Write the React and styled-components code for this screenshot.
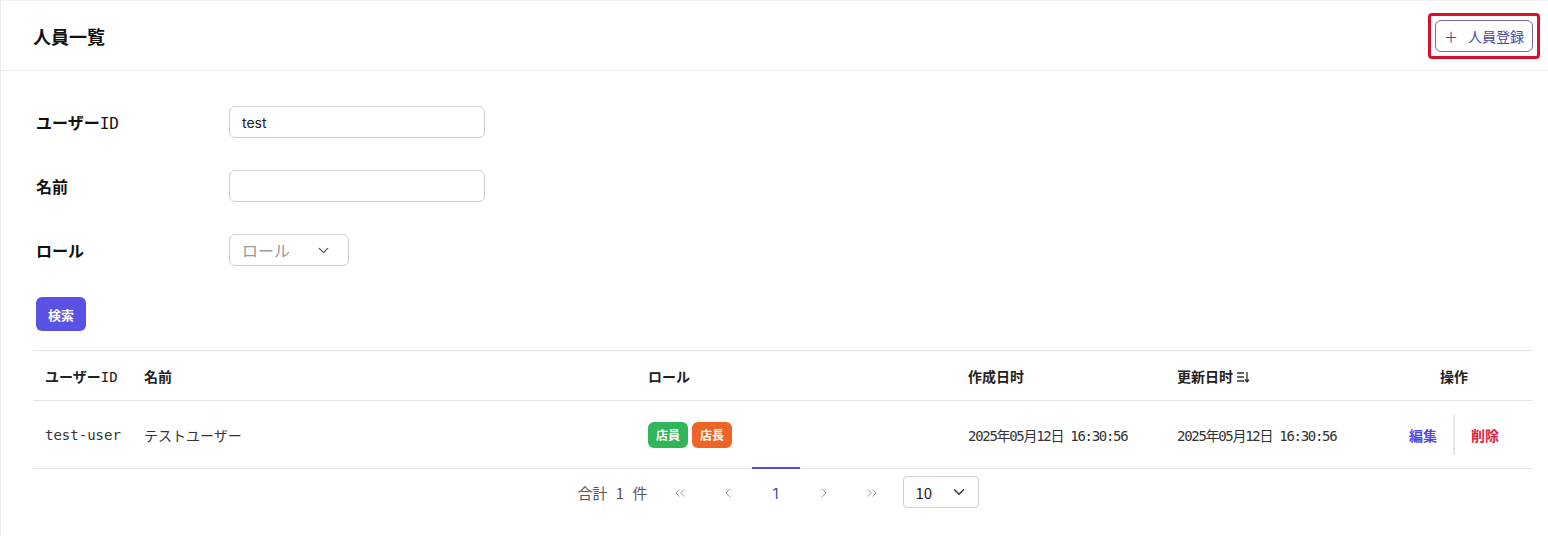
import React from "react";
import styled, { createGlobalStyle } from "styled-components";
import { ChevronDown, ChevronLeft, ChevronRight, ChevronsLeft, ChevronsRight } from "lucide-react";

const GlobalStyle = createGlobalStyle`
  html, body { margin: 0; padding: 0; background: #fff; }
  body { font-family: "Inter", "Noto Sans CJK JP", sans-serif; color: #222; }
`;

const MONO = `"DejaVu Sans Mono", "Noto Sans CJK JP", monospace`;

const Page = styled.div`
  border-left: 1px solid #ececec;
  border-top: 1px solid #f0f0f0;
  min-height: 536px;
  box-sizing: border-box;
`;

const Header = styled.div`
  height: 69px;
  display: flex;
  align-items: center;
  justify-content: space-between;
  padding: 0 15px 0 32px;
  border-bottom: 1px solid #f0f0f0;
`;

const Title = styled.h1`
  margin: 0;
  font-family: "Noto Sans CJK JP", sans-serif;
  font-size: 18px;
  font-weight: 700;
  color: #111;
`;

const Highlight = styled.div`
  margin: -7px -7px -7px 0;
  padding: 4px;
  border: 3px solid #d6102e;
  border-radius: 4px;
  display: flex;
`;

const OutlineButton = styled.button`
  height: 32px;
  width: 98px;
  display: flex;
  align-items: center;
  justify-content: center;
  gap: 10px;
  border: 1px solid #6d69b3;
  border-radius: 6px;
  background: #fff;
  color: #4b46a3;
  font-family: "Noto Sans CJK JP", sans-serif;
  font-size: 14px;
  padding: 0;
`;

const Body = styled.div`
  padding: 35px 15px 0 32px;
`;

const Form = styled.div`
  display: flex;
  flex-direction: column;
  gap: 32px;
  padding-left: 3px;
`;

const FormRow = styled.div`
  display: flex;
  align-items: center;
`;

const Label = styled.label`
  width: 193px;
  font-family: ${MONO};
  font-size: 16px;
  font-weight: 700;
  color: #111;
`;

const Latin = styled.span`
  font-weight: 400;
`;

const TextInput = styled.input`
  box-sizing: border-box;
  width: 256px;
  height: 32px;
  border: 1px solid #cfd0d6;
  border-radius: 6px;
  padding: 0 12px;
  font-family: "Inter", sans-serif;
  font-size: 14px;
  color: #222;
  outline: none;
`;

const SelectBox = styled.div`
  box-sizing: border-box;
  width: ${(p) => p.$width}px;
  height: 32px;
  border: 1px solid #cfd0d6;
  border-radius: ${(p) => p.$radius || 6}px;
  display: flex;
  align-items: center;
  justify-content: space-between;
  padding: 0 ${(p) => p.$padRight || 16}px 0 12px;
  font-family: "Noto Sans CJK JP", sans-serif;
  font-size: ${(p) => p.$fontSize || 16}px;
  color: ${(p) => p.$color || "#999"};
`;

const PrimaryButton = styled.button`
  align-self: flex-start;
  margin-top: -1px;
  width: 50px;
  height: 34px;
  border: none;
  border-radius: 6px;
  background: #5a51e5;
  color: #fff;
  font-family: "Noto Sans CJK JP", sans-serif;
  font-size: 13px;
  font-weight: 700;
  padding: 0;
`;

const Table = styled.table`
  margin-top: 19px;
  width: 100%;
  border-collapse: collapse;
  table-layout: fixed;
`;

const Th = styled.th`
  height: 49px;
  padding: 0 12px;
  text-align: ${(p) => p.$align || "left"};
  font-family: ${MONO};
  font-size: 14px;
  font-weight: 700;
  color: #222;
  border-top: 1px solid #e4e4e7;
  border-bottom: 1px solid #e4e4e7;
  white-space: nowrap;
`;

const Td = styled.td`
  height: 67px;
  padding: 0 12px;
  font-family: ${(p) => p.$font || MONO};
  font-size: 14px;
  color: #333;
  border-bottom: 1px solid #e4e4e7;
  white-space: nowrap;
`;

const DateText = styled.span`
  font-family: "DejaVu Sans Mono", "Noto Sans CJK JP", monospace;
  font-size: 14px;
  letter-spacing: -1.3px;
`;

const SortIcon = styled.svg`
  margin-left: 3px;
  vertical-align: -2px;
`;

const Tags = styled.div`
  display: flex;
  gap: 4px;
`;

const Tag = styled.span`
  display: inline-flex;
  align-items: center;
  justify-content: center;
  width: 40px;
  height: 26px;
  border-radius: 6px;
  background: ${(p) => p.$bg};
  color: #fff;
  font-family: "Noto Sans CJK JP", sans-serif;
  font-size: 12px;
  font-weight: 700;
`;

const Actions = styled.div`
  display: flex;
  align-items: center;
  justify-content: center;
`;

const ActionLink = styled.a`
  font-family: "Noto Sans CJK JP", sans-serif;
  font-size: 14px;
  font-weight: 700;
  color: ${(p) => p.$color};
  padding: 0 16px;
  cursor: pointer;
`;

const Divider = styled.span`
  width: 2px;
  height: 40px;
  background: #e6e6e6;
`;

const Pager = styled.div`
  display: flex;
  align-items: center;
  justify-content: center;
  margin-top: -2px;
  padding-right: 10px;
`;

const Total = styled.span`
  font-family: "Noto Sans CJK JP", sans-serif;
  font-size: 15px;
  color: #555;
  margin-right: 8px;
  word-spacing: 5px;
`;

const PageItem = styled.span`
  box-sizing: border-box;
  width: 48px;
  height: 50px;
  display: flex;
  align-items: center;
  justify-content: center;
  border-top: 2px solid ${(p) => (p.$active ? "#5752c2" : "transparent")};
  color: ${(p) => (p.$active ? "#4d49a8" : "#999")};
  font-family: "Inter", sans-serif;
  font-size: 15px;
`;

const PageSize = styled(SelectBox)`
  margin-left: 7px;
`;

function SortDesc() {
  return (
    <SortIcon width="14" height="14" viewBox="0 0 14 14" fill="none" stroke="#333" strokeWidth="1.3">
      <path d="M1 3h7M1 7h7M1 11h7" />
      <path d="M11 2v10M9 9.5l2 2.5 2-2.5" />
    </SortIcon>
  );
}

export default function App() {
  return (
    <>
      <GlobalStyle />
      <Page>
        <Header>
          <Title>人員一覧</Title>
          <Highlight>
            <OutlineButton>
              <span>＋</span>
              <span>人員登録</span>
            </OutlineButton>
          </Highlight>
        </Header>
        <Body>
          <Form>
            <FormRow>
              <Label>ユーザー<Latin>ID</Latin></Label>
              <TextInput defaultValue="test" />
            </FormRow>
            <FormRow>
              <Label>名前</Label>
              <TextInput defaultValue="" />
            </FormRow>
            <FormRow>
              <Label>ロール</Label>
              <SelectBox $width={120}>
                <span>ロール</span>
                <ChevronDown size={17} color="#555" strokeWidth={1.8} />
              </SelectBox>
            </FormRow>
            <PrimaryButton>検索</PrimaryButton>
          </Form>

          <Table>
            <colgroup>
              <col style={{ width: 99 }} />
              <col style={{ width: 504 }} />
              <col style={{ width: 320 }} />
              <col style={{ width: 209 }} />
              <col style={{ width: 210 }} />
              <col />
            </colgroup>
            <thead>
              <tr>
                <Th>ユーザー<Latin>ID</Latin></Th>
                <Th>名前</Th>
                <Th>ロール</Th>
                <Th>作成日时</Th>
                <Th>
                  更新日时
                  <SortDesc />
                </Th>
                <Th $align="center">操作</Th>
              </tr>
            </thead>
            <tbody>
              <tr>
                <Td>test-user</Td>
                <Td $font={`"Noto Sans CJK JP", sans-serif`}>テストユーザー</Td>
                <Td>
                  <Tags>
                    <Tag $bg="#2fb55a">店員</Tag>
                    <Tag $bg="#ee6326">店長</Tag>
                  </Tags>
                </Td>
                <Td><DateText>2025年05月12日 16:30:56</DateText></Td>
                <Td><DateText>2025年05月12日 16:30:56</DateText></Td>
                <Td>
                  <Actions>
                    <ActionLink $color="#5448e0">編集</ActionLink>
                    <Divider />
                    <ActionLink $color="#e0203c">削除</ActionLink>
                  </Actions>
                </Td>
              </tr>
            </tbody>
          </Table>

          <Pager>
            <Total>合計 1 件</Total>
            <PageItem><ChevronsLeft size={16} strokeWidth={1.4} /></PageItem>
            <PageItem><ChevronLeft size={16} strokeWidth={1.4} /></PageItem>
            <PageItem $active>1</PageItem>
            <PageItem><ChevronRight size={16} strokeWidth={1.4} /></PageItem>
            <PageItem><ChevronsRight size={16} strokeWidth={1.4} /></PageItem>
            <PageSize $width={76} $radius={4} $padRight={10} $fontSize={15} $color="#222">
              <span>10</span>
              <ChevronDown size={18} color="#333" strokeWidth={1.8} />
            </PageSize>
          </Pager>
        </Body>
      </Page>
    </>
  );
}
